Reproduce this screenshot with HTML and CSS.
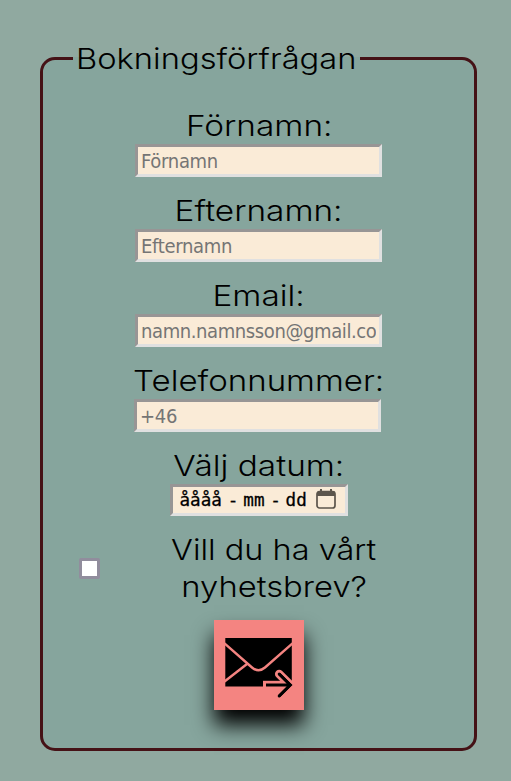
FILE: index.html
```html
<!DOCTYPE html>
<html lang="sv">
<head>
<meta charset="utf-8">
<title>Bokningsförfrågan</title>
<link rel="stylesheet" href="styles.css">
</head>
<body>
<form>
<fieldset class="booking">
  <legend><span class="text title">Bokningsförfrågan</span></legend>
  <div class="fields">
    <div class="field"><label for="first"><span class="text first">Förnamn:</span></label><input id="first" type="text" placeholder="Förnamn"></div>
    <div class="field"><label for="last"><span class="text last">Efternamn:</span></label><input id="last" type="text" placeholder="Efternamn"></div>
    <div class="field"><label for="email"><span class="text email">Email:</span></label><input id="email" type="email" placeholder="namn.namnsson@gmail.com"></div>
    <div class="field phone-field"><label for="phone"><span class="text phone">Telefonnummer:</span></label><input id="phone" type="tel" placeholder="+46"></div>
    <div class="field"><label><span class="text date-label">Välj datum:</span></label>
      <div class="date"><span class="year">åååå</span><span class="dash">-</span><span class="month">mm</span><span class="dash">-</span><span class="day">dd</span>
        <svg class="calendar" width="20" height="20" viewBox="0 0 20 20"><rect x="1" y="2.5" width="18" height="16.5" rx="2.5" fill="none" stroke="#5c554c" stroke-width="1.7"/><path d="M1 7V4a2 2 0 0 1 2-2h1V0h2v2h8V0h2v2h1a2 2 0 0 1 2 2v3z" fill="#5c554c"/></svg>
      </div>
    </div>
    <div class="newsletter"><input id="news" type="checkbox"><label for="news"><span class="text news-a">Vill du ha vårt</span><span class="text news-b">nyhetsbrev?</span></label></div>
    <button type="button" aria-label="Skicka">
      <svg width="90" height="90" viewBox="0 0 90 90"><path d="M11.3 18H77.8V66.5H11.3z"/><g fill="none" stroke="#f48481"><path d="M10.5 23.3L38 47.5Q44.5 53 51 47.5L78.5 23.3M10.5 61.5L33 44" stroke-width="2.4"/><path d="M65.2 54L76 64.8" stroke-width="8.5" stroke-linecap="round"/></g><path d="M49 60.8H78V70H49z" fill="#f48481"/><path d="M52 65H76M65.2 54L76.3 65L65.2 76" fill="none" stroke="#000" stroke-width="2.8"/><path d="M65.2 54L76.3 65L65.2 76" fill="none" stroke="#000" stroke-width="3" stroke-linecap="round"/></svg>
    </button>
  </div>
</fieldset>
</form>
</body>
</html>
```
FILE: styles.css
```css
* { box-sizing: border-box; }
body { margin: 0; min-height: 781px; background: #90a9a0; color: #000; font: 300 29px/37px Inter, sans-serif; }
form { padding: 40px 34px 30px 40px; }
.booking { min-width: 0; height: 711px; margin: 0; padding: 30px 30px 0; border: 3px solid #451216; border-radius: 15px; background: #86a59d; }
legend { width: 287px; height: 37px; padding: 0 3px; }
.text { display: block; width: max-content; white-space: nowrap; transform: translateX(0.5px) scaleX(1.15); }
.title { transform: scaleX(1.127); transform-origin: left; }
.phone { transform: translateX(0.5px) scaleX(1.14); }
.news-a { transform: scaleX(1.12); }
.news-b { transform: translateX(1px) scaleX(1.13); }
.fields { display: flex; flex-direction: column; align-items: center; gap: 15px; }
.field { display: flex; flex-direction: column; align-items: center; }
label { display: flex; flex-direction: column; align-items: center; height: 37px; }
input[type="text"], input[type="email"], input[type="tel"] { width: 247px; height: 33px; margin: 0; padding: 1px 3px 0; border: 3px solid; border-color: #979595 #e0e0e0 #e0e0e0 #979595; background: #faebd7; font: 400 20px/25px "DejaVu Sans Condensed", "DejaVu Sans", sans-serif; font-stretch: condensed; letter-spacing: -0.3px; }
input[type="email"] { letter-spacing: -0.4px; }
input::placeholder { color: #757575; }
.phone-field input { margin-right: 2px; }
.date { display: flex; align-items: center; width: 178px; height: 32px; padding: 0 9px 0 7px; border: 3px solid; border-color: #979595 #e0e0e0 #e0e0e0 #979595; background: #faebd7; font: 400 17.6px/26px "DejaVu Sans Mono", monospace; -webkit-text-stroke: 0.3px #000; }
.date span { flex: none; }
.year { width: 43.5px; }
.dash { width: 20.3px; text-align: center; }
.month, .day { width: 22px; }
.calendar { margin: 0 0 2px auto; }
.newsletter { display: flex; align-items: center; justify-content: space-between; width: 289px; height: 74px; align-self: flex-start; margin-left: 3px; }
.newsletter input { appearance: none; width: 21px; height: 21px; margin: 0 0 0 3px; border: 3px solid #918d9d; border-radius: 2px; background: #fff; }
.newsletter label { height: 74px; }
button { width: 90px; height: 90px; padding: 0; border: 0; background: #f48481; box-shadow: 0 15px 20px #000; }
button svg { display: block; }
```
